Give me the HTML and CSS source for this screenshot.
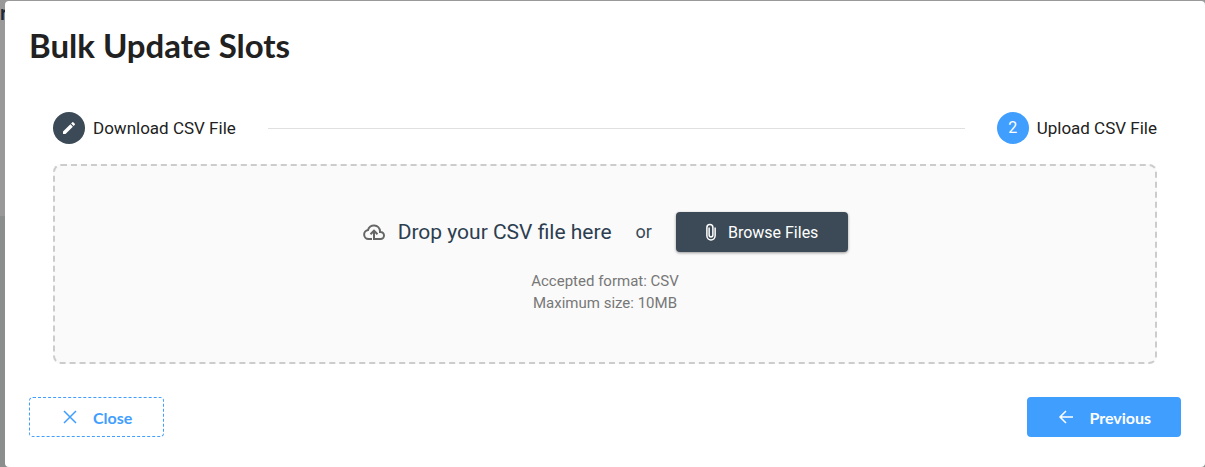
FILE: index.html
```
<!DOCTYPE html>
<html lang="en">
<head>
    <meta charset="UTF-8">
    <meta name="viewport" content="width=device-width, initial-scale=1.0">
    <title>Bulk Update Slots</title>
    <link rel="stylesheet" href="styles.css">
</head>
<body>
    <div class="page-behind" aria-hidden="true">r</div>

    <main class="dialog" role="dialog" aria-labelledby="dialog-title">
        <h1 id="dialog-title" class="dialog-title">Bulk Update Slots</h1>

        <section class="dialog-content">
            <div class="stepper">
                <div class="step">
                    <span class="step-icon step-done">
                        <svg width="16" height="16" viewBox="0 0 24 24" fill="currentColor"><path d="M3 17.25V21h3.75L17.81 9.94l-3.75-3.75L3 17.25zM20.71 7.04a1 1 0 0 0 0-1.41l-2.34-2.34a1 1 0 0 0-1.41 0l-1.83 1.83 3.75 3.75 1.83-1.83z"/></svg>
                    </span>
                    <span class="step-label">Download CSV File</span>
                </div>
                <div class="step-line"></div>
                <div class="step">
                    <span class="step-icon">2</span>
                    <span class="step-label">Upload CSV File</span>
                </div>
            </div>

            <div class="drop-zone">
                <div class="drop-row">
                    <svg class="cloud-icon" width="24" height="24" viewBox="0 0 24 24" fill="none" stroke="currentColor" stroke-width="2"><path d="M10 19H6.500a4.500 4.500 0 0 1-.5-8.950A6.100 6.100 0 0 1 18 11v1h.5a3.500 3.500 0 0 1 0 7H12v-8M8.500 14.200L12 10.700l3.500 3.500"/></svg>
                    <span class="drop-text">Drop your CSV file here</span>
                    <span class="drop-or">or</span>
                    <button type="button" class="btn btn-browse">
                        <svg width="18" height="18" viewBox="0 0 24 24" fill="none" stroke="currentColor" stroke-width="2"><path d="M17.500 6v11a5.500 5.500 0 0 1-11 0V6a4 4 0 0 1 8 0v10a2.500 2.500 0 0 1-5 0V6"/></svg>
                        Browse Files
                    </button>
                </div>
                <p class="drop-hint">Accepted format: CSV<br>Maximum size: 10MB</p>
            </div>
        </section>

        <footer class="dialog-actions">
            <button type="button" class="btn btn-close">
                <svg width="18" height="18" viewBox="0 0 18 18" fill="none" stroke="currentColor" stroke-width="1.500"><path d="M3 3l12 12M15 3L3 15"/></svg>
                Close
            </button>
            <button type="button" class="btn btn-previous">
                <svg width="18" height="18" viewBox="0 0 18 18" fill="none" stroke="currentColor" stroke-width="1.500"><path d="M16 9H3M9 3L3 9l6 6"/></svg>
                Previous
            </button>
        </footer>
    </main>
</body>
</html>
```
FILE: styles.css
```
* {
    box-sizing: border-box;
}

body {
    margin: 0;
    min-height: 100vh;
    padding: 1px 0 0 5px;
    display: flex;
    background: linear-gradient(#999999 216px, #8b8e8d 216px);
    color: #212121;
    font-family: Roboto, sans-serif;
    font-size: 16px;
    line-height: 24px;
    overflow: hidden;
}

/* heading of the page under the dialog */
.page-behind {
    position: absolute;
    top: 0;
    left: 0;
    color: #1f2a38;
    font-family: Lato, sans-serif;
    font-size: 20px;
    font-weight: bold;
}

.dialog {
    position: relative;
    flex: 1;
    padding: 24px;
    border-radius: 4px;
    background: #fff;
}

.dialog-title {
    margin: 0;
    font-family: Lato, sans-serif;
    font-size: 33px;
    font-weight: bold;
    line-height: 40px;
}

.dialog-content {
    padding: 47px 24px 0;
}

.stepper {
    display: flex;
    align-items: center;
    gap: 32px;
    margin-bottom: 20px;
}

.step {
    display: flex;
    align-items: center;
    gap: 8px;
}

.step-icon {
    display: flex;
    align-items: center;
    justify-content: center;
    width: 32px;
    height: 32px;
    border-radius: 50%;
    background: #409eff;
    color: #fff;
}

.step-done {
    background: #3b4a56;
}

.step-label {
    font-size: 17px;
}

.step-line {
    flex: 1;
    border-top: 1px solid #e0e0e0;
}

.drop-zone {
    padding: 46px 24px 48px;
    border: 2px dashed #ccc;
    border-radius: 8px;
    background: #fafafa;
    text-align: center;
}

.drop-row {
    display: flex;
    align-items: center;
    justify-content: center;
    color: #3b4a56;
}

.cloud-icon {
    margin-right: 12px;
    color: #666;
}

.drop-text {
    margin-right: 24px;
    color: #2c3e50;
    font-size: 21px;
}

.drop-or {
    margin-right: 24px;
    font-size: 18px;
}

.drop-hint {
    margin: 18px 0 0;
    color: #777;
    font-size: 15px;
    line-height: 22px;
}

.btn {
    display: flex;
    align-items: center;
    height: 40px;
    border: none;
    border-radius: 4px;
    font-family: Lato, sans-serif;
    font-size: 16px;
    font-weight: bold;
    cursor: pointer;
}

.btn-browse {
    gap: 8px;
    padding: 0 30px 0 26px;
    background: #3b4a56;
    color: #fff;
    font-family: Roboto, sans-serif;
    font-weight: normal;
    box-shadow: 0 1px 3px rgba(0, 0, 0, 0.4);
}

.dialog-actions {
    display: flex;
    justify-content: space-between;
    padding-top: 33px;
}

.btn-close,
.btn-previous {
    gap: 14px;
    padding: 0 30px;
}

.btn-close {
    padding: 0 31px;
    border: 1px dashed #409eff;
    background: #fff;
    color: #409eff;
}

.btn-previous {
    background: #409eff;
    color: #fff;
}
```
